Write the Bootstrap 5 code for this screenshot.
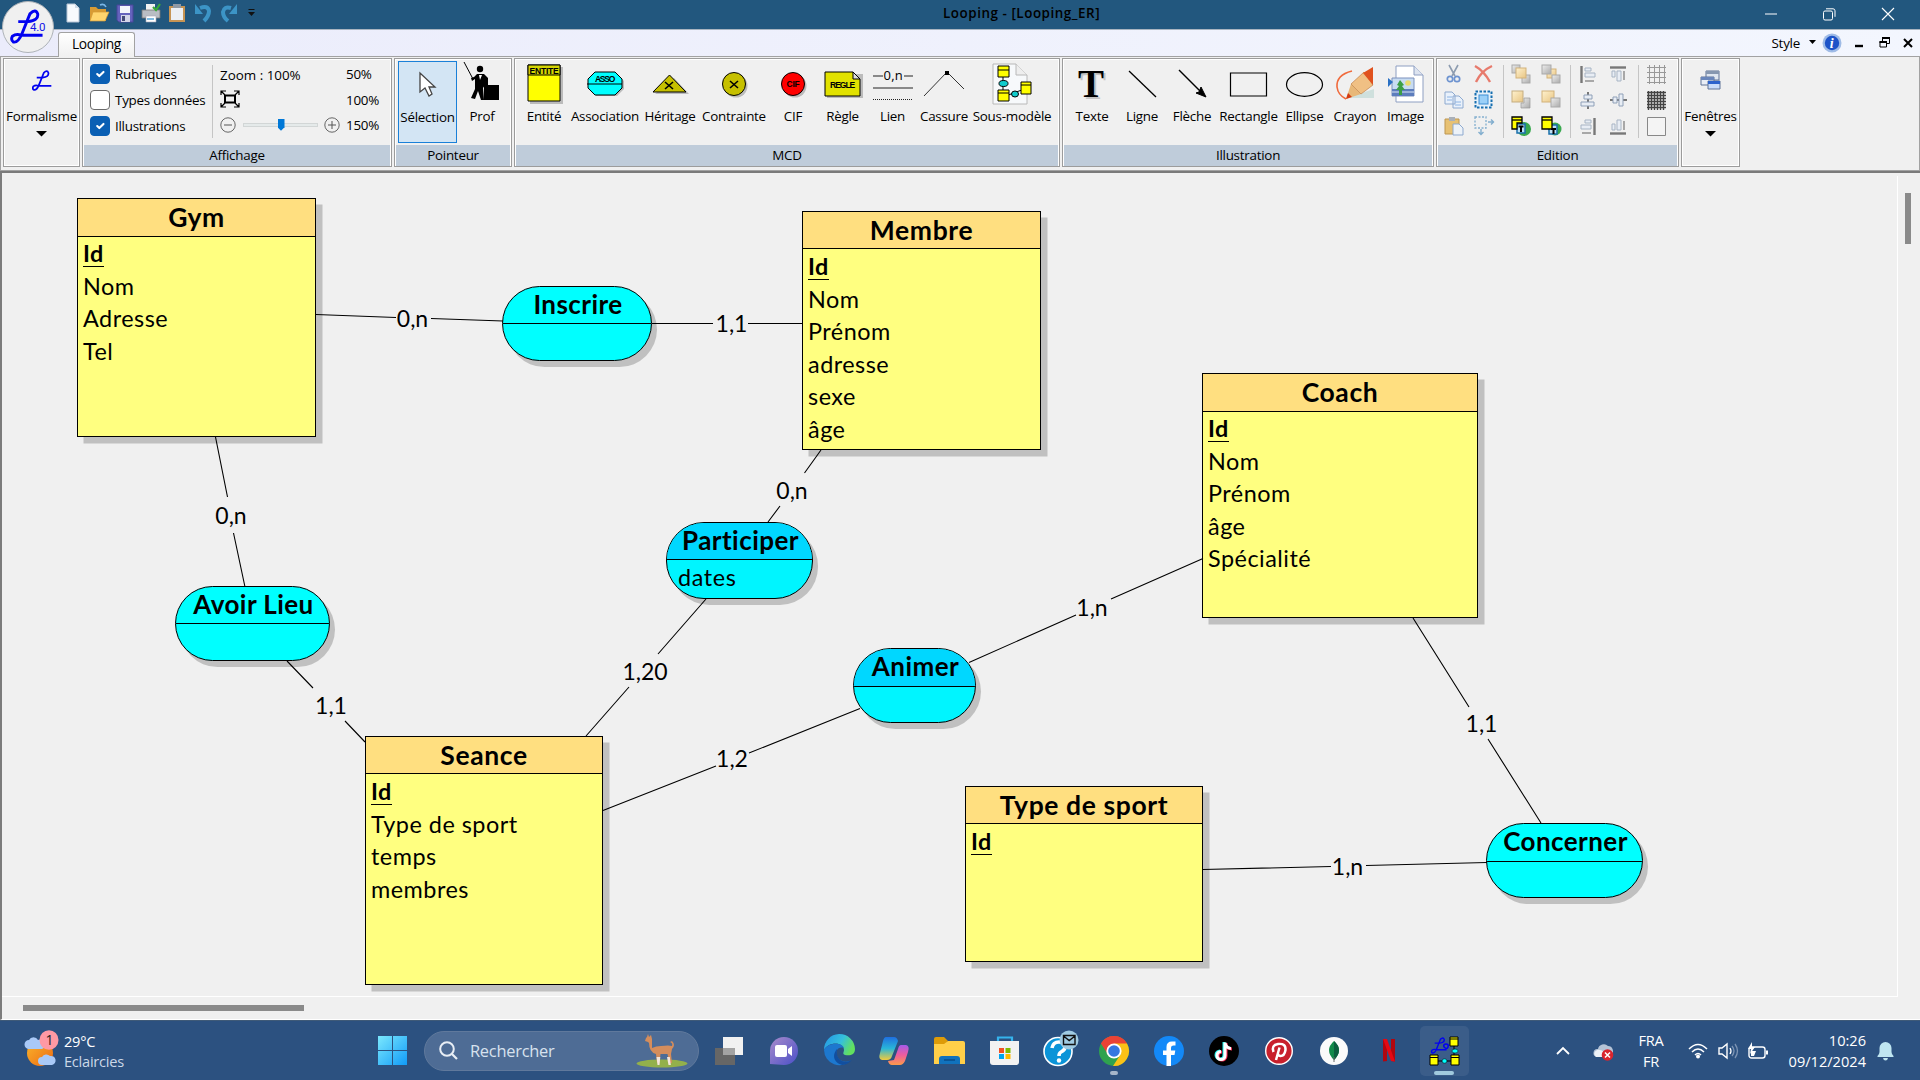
<!DOCTYPE html>
<html lang="fr">
<head>
<meta charset="utf-8">
<meta name="viewport" content="width=device-width, initial-scale=1">
<title>Looping - [Looping_ER]</title>
<link href="https://cdn.jsdelivr.net/npm/bootstrap@5.3.0/dist/css/bootstrap.min.css" rel="stylesheet">
<style>
  html, body { height: 100%; }
  body { width: 1920px; height: 1080px; overflow: hidden; background: #f0f0f0; color: #000; font: 13.4px/18px "Open Sans", "Noto Sans", sans-serif; letter-spacing: -.25px; }
  svg { display: block; flex: none; overflow: visible; }
  /* title bar */
  .titlebar { height: 30px; background: #22577e; border-bottom: 1px solid #a9b4c0; padding-left: 63px; }
  .quick { gap: 6px; height: 26px; }
  .win-title { left: 943px; top: 4px; font-size: 13.4px; font-weight: 600; letter-spacing: .55px; }
  .win-ctl { gap: 46px; padding-right: 25px; height: 28px; }
  .orb { left: 2px; top: 1px; z-index: 3; }
  /* tab strip */
  .tabstrip { height: 27px; background: linear-gradient(90deg, #ebecfb, #f3f6fe); border-bottom: 1px solid #a2a2a2; padding-left: 58px; }
  .tab-main { width: 77px; height: 25px; margin-top: 2px; margin-bottom: -1px; background: linear-gradient(#fff, #f0f0f0); border: 1px solid #a2a2a2; border-bottom: 0; border-radius: 3px 3px 0 0; font-size: 13.8px; letter-spacing: -.4px; padding-top: 2px; }
  .mdi-ctl { padding-right: 7px; height: 25px; }
  /* ribbon */
  .ribbon { height: 114px; padding: 1px 0 0 2px; gap: 2px; border-bottom: 1px solid #a2a2a2; border-right: 1px solid #a2a2a2; border-left: 1px solid #a2a2a2; }
  .grp { height: 109px; border: 1px solid #9c9c9c; box-shadow: inset 0 0 0 1px #fff; padding: 0 1px 1px; }
  .grp-foot { height: 21px; background: #bfccda; font-size: 13.4px; line-height: 21px; text-align: center; }
  .grp-body { height: 86px; }
  .tool { height: 82px; margin-top: 2px; white-space: nowrap; }
  .tool .pic { height: 46px; }
  .tool.active { width: 59px; background: #d3e5f4; border: 1px solid #1a80d8; }
  .vsep { width: 1px; height: 73px; background: #c5c5c5; }
  .check-row { height: 26px; gap: 5px; }
  .form-check-input.cb { width: 20px; height: 20px; margin: 0; border: 1px solid #6b6b6b; border-radius: 4px; flex: none; background-size: 14px; }
  .form-check-input.cb:checked { background-color: #0a5fb4; border-color: #0a5fb4; }
  .zoom-col { width: 126px; margin-left: 7px; }
  .zrow { height: 25.5px; }
  .track { width: 75px; height: 4px; background: #e5eaea; border: 1px solid #d2d6d6; }
  .thumb { width: 7px; height: 12px; left: 34px; top: -5px; background: #0078d7; clip-path: polygon(0 0, 100% 0, 100% 70%, 50% 100%, 0 70%); }
  .col-ic { width: 30px; height: 78px; }
  .col-ic > * { height: 26px; }
  /* workspace */
  .work { height: 849px; border-top: 2px solid #7a7a7a; border-left: 2px solid #7c7c7c; border-bottom: 1px solid #fff; }
  .board { left: -2px; top: -173px; width: 1920px; height: 1020px; }
  .entity { position: absolute; border: 1px solid #000; background: #ffff80; box-shadow: 6.500px 6.500px 0 #c0c0c0; }
  .entity h2, .assoc h2 { margin: 0; font: bold 26.5px/36px Lato, "Open Sans", sans-serif; letter-spacing: .6px; text-align: center; background: #ffdf80; border-bottom: 1px solid #000; height: 37px; }
  .entity.tall h2 { height: 38px; }
  .entity ul { list-style: none; margin: 0; padding: 1px 0 0 5px; font: 23.4px/32.5px Lato, "Open Sans", sans-serif; letter-spacing: .5px; }
  .entity.tall ul { padding-top: 0; }
  .key { font-weight: bold; display: inline-block; border-bottom: 1.5px solid #000; line-height: 26px; }
  .assoc { position: absolute; border: 1px solid #000; border-radius: 38px; background: cyan; box-shadow: 5px 6px 0 #c0c0c0; overflow: hidden; }
  .assoc h2 { background: transparent; font-size: 26px; line-height: 34px; letter-spacing: .45px; padding-left: 2px; }
  .assoc.low h2 { height: 38px; }
  .assoc.alt { background: #00f5ff; } .assoc.alt h2 { background: #00d7ff; }
  .assoc p { margin: 0; padding-left: 11px; font: 23.4px/34px Lato, sans-serif; letter-spacing: .6px; }
  .lbl { font: 23px Lato, "Open Sans", sans-serif; letter-spacing: 0; }
  .bar-v { left: 1903px; top: 20px; width: 6px; height: 51px; background: #8a8a8a; }
  .bar-h { left: 21px; top: 832px; width: 281px; height: 6px; background: #8a8a8a; }
  .rule-h { left: 0; top: 823px; width: 1895px; height: 1px; background: #fff; }
  .rule-v { left: 1895px; top: 3px; width: 1px; height: 821px; background: #fff; }
  /* taskbar */
  .taskbar { height: 60px; background: #2c5180; border-top: 1px solid #3f5a78; color: #fff; font-size: 14.6px; letter-spacing: -.25px; }
  .weather { padding-left: 24px; width: 378px; gap: 8px; line-height: 20px; }
  .weather small { font-size: 14.6px; color: #cbd8e8; }
  .search { width: 275px; height: 40px; border-radius: 20px; background: #4e6c95; border: 1px solid #60799c; margin-left: 17px; font-size: 16.4px; color: #d8e2ee; padding: 0 10px 0 14px; }
  .apps { margin-left: 2.5px; }
  .app { width: 55px; height: 58px; }
  .app .spot { width: 49px; height: 50px; border-radius: 5px; background: #3b5d89; }
  .ind { left: 50%; transform: translateX(-50%); bottom: 5px; height: 4px; border-radius: 2px; }
  .tray { line-height: 20.5px; }
</style>
<script src="https://cdn.jsdelivr.net/npm/bootstrap@5.3.0/dist/js/bootstrap.bundle.min.js"></script>
</head>
<body class="position-relative d-flex flex-column">

<svg width="0" height="0" class="position-absolute">
  <defs>
    <linearGradient id="gGold" x1="0" y1="0" x2="1" y2="1"><stop offset="0" stop-color="#fff2cf"/><stop offset="1" stop-color="#e8c583"/></linearGradient>
    <linearGradient id="gGray" x1="0" y1="0" x2="1" y2="1"><stop offset="0" stop-color="#eee"/><stop offset="1" stop-color="#aaa"/></linearGradient>
    <linearGradient id="gWin" x1="0" y1="0" x2="1" y2="1"><stop offset="0" stop-color="#7be8fd"/><stop offset="1" stop-color="#119bf8"/></linearGradient>
    <linearGradient id="gEdge" x1="0" y1="0" x2="1" y2=".4"><stop offset="0" stop-color="#2394e6"/><stop offset=".6" stop-color="#35c0dc"/><stop offset="1" stop-color="#62e060"/></linearGradient>
    <linearGradient id="gCopA" x1="0" y1="0" x2="0" y2="1"><stop offset="0" stop-color="#1f6fe0"/><stop offset=".5" stop-color="#29b6d8"/><stop offset="1" stop-color="#f1cb3c"/></linearGradient>
    <linearGradient id="gCopB" x1="0" y1="0" x2="0" y2="1"><stop offset="0" stop-color="#a45bea"/><stop offset=".5" stop-color="#ee5c9d"/><stop offset="1" stop-color="#fb9a4a"/></linearGradient>
    <linearGradient id="gChat" x1="0" y1="0" x2="1" y2="1"><stop offset="0" stop-color="#a98ccb"/><stop offset="1" stop-color="#4a4fc8"/></linearGradient>
    <linearGradient id="gSun" x1="0" y1="0" x2="1" y2="1"><stop offset="0" stop-color="#f9b62c"/><stop offset="1" stop-color="#ee6a12"/></linearGradient>
    <symbol id="loop" viewBox="0 0 34 36"><path d="M8 13H18Q29 12 28 5Q26 -1 20 5L12 25Q8 35 3 34Q0 32 2 28Q6 25 11 27H33" fill="none" stroke="#0202f0" stroke-width="3"/></symbol>
    <symbol id="back" viewBox="0 0 20 20"><rect x="1" y="1" width="11" height="11" fill="url(#gGold)" stroke="#c5ad80"/><path d="M13 8h6v10h-9v-5h3z" fill="url(#gGray)" stroke="#999" stroke-width=".7"/></symbol>
  </defs>
</svg>

<!-- Title bar -->
<header class="titlebar d-flex justify-content-between">
  <div class="quick d-flex align-items-center">
    <svg width="20" height="20"><path d="M4 1h8l4 4v14H4z" fill="#f7fafd" stroke="#b8c6d6"/><path d="M12 1v4h4" fill="#cfdbe8"/></svg>
    <svg width="20" height="20"><path d="M1 4h6l2 2h8v12H1z" fill="#d89b34"/><path d="M4 9h16l-4 9H1z" fill="#ffd56e" stroke="#d49a35" stroke-width=".7"/><path d="M11 2q4-2 6 2" fill="none" stroke="#79b6e8" stroke-width="1.6"/></svg>
    <svg width="20" height="20"><path d="M2 2h16v17H4l-2-2z" fill="#6563bd" stroke="#494799"/><path d="M5 3h10v7H5z" fill="#f2f4fb"/><path d="M6 12h9v7H6z" fill="#d2d4e8"/><path d="M7 13h3v5H7z" fill="#444a78"/></svg>
    <svg width="20" height="20"><path d="M5 1h9v6H5z" fill="#f2f2f2"/><path d="M1 7h18v8H1z" fill="#b9bdc4" stroke="#777" stroke-width=".8"/><path d="M5 13h10v6H5z" fill="#fff" stroke="#aab" stroke-width=".6"/><path d="M6 16h7" stroke="#56a4d8" stroke-width="1.5"/><path d="M12 4l3 3 4-6" fill="none" stroke="#36a935" stroke-width="2.2"/></svg>
    <svg width="20" height="20"><path d="M2 3h16v16H2z" fill="#c69454"/><path d="M4 5h12v12H4z" fill="#eceff4"/><path d="M6 1h8v4H6z" fill="#9099a5"/></svg>
    <svg width="20" height="20"><path d="M7 5q8-3 9 3 0 5-5 10" fill="none" stroke="#3c94c6" stroke-width="4"/><path d="M2 1v10h8z" fill="#3c94c6"/></svg>
    <svg width="20" height="20"><path d="M12 5Q5 3 4 9q0 5 5 9" fill="none" stroke="#3c94c6" stroke-width="4"/><path d="M18 1v10h-8z" fill="#3c94c6"/></svg>
    <svg width="10" height="10" style="margin-left:2px"><path d="M1.500 1.500h6" stroke="#111"/><path d="M1 4h7L4.500 8z" fill="#111"/></svg>
  </div>
  <div class="win-title position-absolute">Looping - [Looping_ER]</div>
  <div class="win-ctl d-flex align-items-center">
    <svg width="12" height="12"><path d="M0 6h12" stroke="#fff"/></svg>
    <svg width="13" height="12"><rect x=".5" y="3" width="9" height="9" rx="1.500" fill="none" stroke="#fff"/><path d="M3 .8h7q2 0 2 2v6" fill="none" stroke="#fff"/></svg>
    <svg width="13" height="13"><path d="M0 0l12 12M12 0L0 12" stroke="#fff" stroke-width="1.100"/></svg>
  </div>
</header>
<div class="orb position-absolute">
  <svg width="52" height="52"><circle cx="26" cy="26" r="25.500" fill="#f0f0f0" stroke="#aeb3b8"/><use href="#loop" x="8" y="8" width="34" height="35"/><text x="28" y="30" font-family="Roboto" font-size="11.500" fill="#1414e8">4.0</text></svg>
</div>

<!-- Tab strip -->
<nav class="tabstrip d-flex justify-content-between">
  <div class="tab-main text-center">Looping</div>
  <div class="mdi-ctl d-flex align-items-center">
    <span>Style</span>
    <svg width="7" height="5" style="margin-left:9px"><path d="M0 0h7L3.500 4z"/></svg>
    <svg width="20" height="20" style="margin-left:6px"><circle cx="10" cy="10" r="9.500" fill="#9fbbe6"/><circle cx="10" cy="10" r="7.200" fill="#1d53c8"/><text x="7.800" y="15" font-family="Liberation Serif" font-style="italic" font-weight="bold" font-size="14" fill="#fff">i</text></svg>
    <svg width="8" height="10" style="margin-left:13px"><path d="M0 8h8" stroke="#000" stroke-width="2.400"/></svg>
    <svg width="11" height="11" style="margin-left:16px"><path d="M3.500 4V1h7v5.500H8M1 4.500h6.500v5.500H1z" fill="none" stroke="#000"/><path d="M3 1h8M.5 5h7.500" stroke="#000" stroke-width="2"/></svg>
    <svg width="10" height="10" style="margin-left:13px"><path d="M1 1l8 8M9 1L1 9" stroke="#000" stroke-width="2"/></svg>
  </div>
</nav>

<!-- Ribbon -->
<section class="ribbon d-flex">
  <div class="grp" style="width:77px">
    <div class="tool w-100 d-flex flex-column align-items-center"><div class="pic d-flex align-items-center"><svg width="20" height="21" class="mb-2"><use href="#loop" width="20" height="21"/></svg></div><span>Formalisme</span><svg width="12" height="7" style="margin-top:5px"><path d="M0 1h11L5.500 6.500z"/></svg></div>
  </div>

  <div class="grp" style="width:310px">
    <div class="grp-body d-flex" style="padding:2px 6px 0 6px">
      <div style="width:122px">
        <label class="check-row d-flex align-items-center"><input class="form-check-input cb" type="checkbox" checked>Rubriques</label>
        <label class="check-row d-flex align-items-center"><input class="form-check-input cb" type="checkbox">Types données</label>
        <label class="check-row d-flex align-items-center"><input class="form-check-input cb" type="checkbox" checked>Illustrations</label>
      </div>
      <div class="vsep mt-1"></div>
      <div class="zoom-col">
        <div class="zrow d-flex align-items-center" style="padding-top:2px;letter-spacing:0">Zoom : 100%</div>
        <div class="zrow d-flex align-items-center"><svg width="20" height="18"><rect x="5" y="5.500" width="10" height="7" fill="none" stroke="#000" stroke-width="2"/><path d="M1 5V1h5M14 1h5v4M1 13v4h5M14 17h5v-4M1 1l4 4M19 1l-4 4M1 17l4-4M19 17l-4-4" fill="none" stroke="#000" stroke-width="1.200"/></svg></div>
        <div class="zrow d-flex align-items-center" style="gap:6.500px">
          <svg width="16" height="16"><circle cx="8" cy="8" r="7.200" fill="none" stroke="#666"/><path d="M4 8h8" stroke="#555"/></svg>
          <div class="track position-relative"><div class="thumb position-absolute"></div></div>
          <svg width="16" height="16"><circle cx="8" cy="8" r="7.200" fill="none" stroke="#666"/><path d="M4 8h8M8 4v8" stroke="#555"/></svg>
        </div>
      </div>
      <div><div class="zrow pt-1">50%</div><div class="zrow pt-1">100%</div><div class="zrow pt-1">150%</div></div>
    </div>
    <div class="grp-foot">Affichage</div>
  </div>

  <div class="grp" style="width:118px">
    <div class="grp-body d-flex" style="padding-left:2px">
      <div class="tool active d-flex flex-column align-items-center"><div class="pic d-flex align-items-center"><svg width="18" height="26"><path d="M1 1v19l5-4 4 8 3-2-3-7h6z" fill="#fff" stroke="#444" stroke-width="1.300"/></svg></div><span>Sélection</span></div>
      <div class="tool d-flex flex-column align-items-center" style="width:50px"><div class="pic"><svg width="36" height="42"><path d="M0 1l9 17" stroke="#000"/><circle cx="16" cy="8" r="3.200"/><path d="M7 17l3-1 3-3h7l4 4v9l-3-2-2 3 1 12h-3l-3-9-3 8-4-1 4-9V18l-3 2z"/><path d="M15 14l1 5 2-5z" fill="#fff"/><path d="M20 24h15v15H20z"/></svg></div><span>Prof</span></div>
    </div>
    <div class="grp-foot">Pointeur</div>
  </div>

  <div class="grp" style="width:546px">
    <div class="grp-body d-flex" style="padding-left:3px">
      <div class="tool d-flex flex-column align-items-center" style="width:50px"><div class="pic d-flex align-items-center"><svg width="34" height="40"><path d="M3 3h33v37H3z" fill="#bbb"/><path d="M1 1h32v36H1z" fill="#ff0" stroke="#000"/><path d="M1 1h32v10H1z" fill="#d5d500" stroke="#000"/><text x="2.500" y="9.500" font-family="Liberation Sans" font-weight="bold" font-size="8.500" textLength="29">ENTITE</text></svg></div><span>Entité</span></div>
      <div class="tool d-flex flex-column align-items-center" style="width:72px"><div class="pic d-flex align-items-center"><svg width="38" height="26"><path d="M10 3h21l7 7v8l-7 7H10z" fill="#bbb"/><path d="M9 1h20l7 7v9l-7 7H9l-7-7V8z" fill="#0ff" stroke="#000"/><path d="M1 13h35" stroke="#000"/><text x="9" y="11" font-family="Liberation Sans" font-weight="bold" font-size="8.500" textLength="20">ASSO</text></svg></div><span>Association</span></div>
      <div class="tool d-flex flex-column align-items-center" style="width:58px"><div class="pic d-flex align-items-center"><svg width="36" height="20"><path d="M3 20h34L22 4z" fill="#bbb"/><path d="M1 18h33L17.500 1z" fill="#c6c000" stroke="#000"/><path d="M13 8l8 7M21 8l-8 7" stroke="#000" stroke-width="1.600"/></svg></div><span>Héritage</span></div>
      <div class="tool d-flex flex-column align-items-center" style="width:70px"><div class="pic d-flex align-items-center"><svg width="25" height="25"><circle cx="14" cy="14" r="11.500" fill="#bbb"/><circle cx="12" cy="12" r="11.500" fill="#c6c000" stroke="#000"/><path d="M8 9l8 7M16 9l-8 7" stroke="#000" stroke-width="1.600"/></svg></div><span>Contrainte</span></div>
      <div class="tool d-flex flex-column align-items-center" style="width:48px"><div class="pic d-flex align-items-center"><svg width="25" height="25"><circle cx="14" cy="14" r="11.500" fill="#bbb"/><circle cx="12" cy="12" r="11.500" fill="red" stroke="#000"/><text x="5.500" y="15" font-family="Liberation Sans" font-weight="bold" font-size="8.500" textLength="13">CIF</text></svg></div><span>CIF</span></div>
      <div class="tool d-flex flex-column align-items-center" style="width:51px"><div class="pic d-flex align-items-center"><svg width="38" height="27"><path d="M3 3h36v24H3z" fill="#bbb"/><path d="M1 1h28l7 7v17H1z" fill="#e2e200" stroke="#000"/><path d="M29 1v7h7z" fill="#ddd" stroke="#000"/><text x="6" y="17" font-family="Liberation Sans" font-weight="bold" font-size="8.500" textLength="25">REGLE</text></svg></div><span>Règle</span></div>
      <div class="tool d-flex flex-column align-items-center" style="width:49px"><div class="pic d-flex align-items-center"><svg width="40" height="32"><path d="M0 8h10M31 8h9M0 20h40" stroke="#222" stroke-width="1.200"/><path d="M0 31.500h40" stroke="#222" stroke-dasharray="1 1"/><text x="10.500" y="12" font-size="13" textLength="19">0,n</text></svg></div><span>Lien</span></div>
      <div class="tool d-flex flex-column align-items-center" style="width:54px"><div class="pic d-flex align-items-center"><svg width="42" height="26"><path d="M1 25L24 1 41 18" fill="none" stroke="#333"/><path d="M22 0h4v4h-4z"/></svg></div><span>Cassure</span></div>
      <div class="tool d-flex flex-column align-items-center" style="width:82px"><div class="pic d-flex align-items-center"><svg width="40" height="42"><path d="M1 1h23l11 11v29H1z" fill="#f7f9fb" stroke="#b8b8b8"/><path d="M24 1v11h11" fill="#eee" stroke="#b8b8b8"/><path d="M11 8v26M11 34l24-9" stroke="#000"/><g fill="#ff0" stroke="#000"><path d="M6 3h11v11H6zM6 7h11M6 27h11v11H6zM6 30h11M29 19h10v12H29zM29 22h10"/></g><ellipse cx="11.500" cy="20.500" rx="4.500" ry="3" fill="#1cc" stroke="#000"/><ellipse cx="23" cy="31" rx="3.500" ry="3" fill="#1cc" stroke="#000"/></svg></div><span>Sous-modèle</span></div>
    </div>
    <div class="grp-foot">MCD</div>
  </div>

  <div class="grp" style="width:372px">
    <div class="grp-body d-flex" style="padding-left:3px">
      <div class="tool d-flex flex-column align-items-center" style="width:50px"><div class="pic d-flex align-items-center"><svg width="26" height="28"><text x="1" y="29" font-family="Liberation Serif" font-weight="bold" font-size="39" fill="#c4c4c4" textLength="26">T</text><text x="-1" y="27" font-family="Liberation Serif" font-weight="bold" font-size="39" textLength="26">T</text></svg></div><span>Texte</span></div>
      <div class="tool d-flex flex-column align-items-center" style="width:50px"><div class="pic d-flex align-items-center"><svg width="29" height="28"><path d="M1 1l27 26" stroke="#000" stroke-width="1.300"/></svg></div><span>Ligne</span></div>
      <div class="tool d-flex flex-column align-items-center" style="width:50px"><div class="pic d-flex align-items-center"><svg width="28" height="28"><path d="M1 0l24 24" stroke="#000" stroke-width="1.400"/><path d="M28 27l-10-4 3-1 2-5z" stroke="#000"/></svg></div><span>Flèche</span></div>
      <div class="tool d-flex flex-column align-items-center" style="width:63px"><div class="pic d-flex align-items-center"><svg width="37" height="25"><path d="M.5 1h36v23H.5z" fill="none" stroke="#000" stroke-width="1.200"/></svg></div><span>Rectangle</span></div>
      <div class="tool d-flex flex-column align-items-center" style="width:49px"><div class="pic d-flex align-items-center"><svg width="37" height="25"><ellipse cx="18.500" cy="12.500" rx="18" ry="11.800" fill="none" stroke="#000" stroke-width="1.200"/></svg></div><span>Ellipse</span></div>
      <div class="tool d-flex flex-column align-items-center" style="width:52px"><div class="pic d-flex align-items-center"><svg width="38" height="34"><path d="M10 31h28V22z" fill="#cfe0dd"/><path d="M16 4Q0 8 1 20q1 8 9 12" fill="none" stroke="#f06a3c" stroke-width="1.600"/><path d="M10 32l5-15 10 10z" fill="#e8b878"/><path d="M10 32l2-6 4 4z" fill="#d43a12"/><path d="M15 17L28 5l9 13-12 9z" fill="#f0c084" stroke="#b9743a" stroke-width=".6"/><path d="M27 6L37 0v18z" fill="#e0521e"/></svg></div><span>Crayon</span></div>
      <div class="tool d-flex flex-column align-items-center" style="width:49px"><div class="pic d-flex align-items-center"><svg width="36" height="38"><path d="M8 1h18l9 9v27H8z" fill="#fff" stroke="#8e9fc2"/><path d="M26 1v9h9" fill="#dde4f0" stroke="#8e9fc2"/><path d="M4 13h22v18H4z" fill="#c8dcf2" stroke="#7c91bd"/><path d="M4 24h22v7H4z" fill="#5d7dbd"/><path d="M4 27h22" stroke="#dbe7f6"/><path d="M12 15l4 5-2 1 3 4h-3v5h-3v-5H8l3-4-2-1z" fill="#3c9f45"/><circle cx="20" cy="18" r="2.800" fill="#e8dc70"/><path d="M0 13l5 4-5 5z" fill="#2a70c4"/></svg></div><span>Image</span></div>
    </div>
    <div class="grp-foot">Illustration</div>
  </div>

  <div class="grp" style="width:243px">
    <div class="grp-body d-flex" style="padding:2px 0 0 1px">
      <div class="col-ic">
        <div class="d-flex justify-content-center align-items-center"><svg width="20" height="20"><path d="M5 1l6 11M14 1L8 12" stroke="#8d9cb0" stroke-width="1.600"/><circle cx="6" cy="15" r="2.700" fill="none" stroke="#6d93d0" stroke-width="1.700"/><circle cx="13" cy="15" r="2.700" fill="none" stroke="#6d93d0" stroke-width="1.700"/></svg></div>
        <div class="d-flex justify-content-center align-items-center"><svg width="20" height="18"><path d="M1 1h7l3 3v9H1zM9 5h6l4 4v8H9z" fill="#e9f1fb" stroke="#8da9cf"/><path d="M3 6h5M3 9h5M11 11h6M11 14h6" stroke="#8db4e4"/></svg></div>
        <div class="d-flex justify-content-center align-items-center"><svg width="20" height="20"><path d="M1 3h14v15H1z" fill="#e7c173" stroke="#bd9651"/><path d="M5 1h6v4H5z" fill="#aab0b8"/><path d="M9 8h6l4 4v7H9z" fill="#edf2f8" stroke="#8da9cf"/></svg></div>
      </div>
      <div class="col-ic">
        <div class="d-flex justify-content-center align-items-center"><svg width="20" height="18"><path d="M1 1q9 5 15 16M18 1Q7 6 2 17" fill="none" stroke="#e77a6c" stroke-width="2.400"/></svg></div>
        <div class="d-flex justify-content-center align-items-center"><svg width="20" height="20"><rect x="1.500" y="1.500" width="16" height="16" fill="#e4f1fb" stroke="#176fb0" stroke-width="2" stroke-dasharray="2.500 1.500"/><rect x="5" y="5" width="9" height="9" fill="#9ad0f8" stroke="#3f8fd4"/></svg></div>
        <div class="d-flex justify-content-center align-items-center"><svg width="20" height="20"><rect x="1" y="1" width="11" height="11" fill="none" stroke="#82aece" stroke-width="1.300" stroke-dasharray="2 1.500"/><path d="M14 6h6M17 3.500l2.500 2.500-2.500 2.500M7 13v6M4.500 16l2.500 2.500 2.500-2.500" fill="none" stroke="#82aece" stroke-width="1.400"/></svg></div>
      </div>
      <div class="vsep mt-1" style="margin:0 2px 0 4px"></div>
      <div class="col-ic">
        <div class="d-flex justify-content-center align-items-center"><svg width="20" height="20"><rect x="1" y="1" width="8" height="8" fill="url(#gGray)" stroke="#aaa"/><rect x="11" y="11" width="8" height="8" fill="url(#gGray)" stroke="#aaa"/><rect x="5" y="4" width="10" height="10" fill="url(#gGold)" stroke="#d2b27a"/></svg></div>
        <div class="d-flex justify-content-center align-items-center"><svg width="20" height="20"><use href="#back" width="20" height="20"/></svg></div>
        <div class="d-flex justify-content-center align-items-center"><svg width="20" height="20"><circle cx="13" cy="13" r="7" fill="#39a94f"/><path d="M6 8h8v9H6z" fill="#bfe0f4" stroke="#1b70aa" stroke-width="1.500"/><path d="M7.500 10.500h5M10 11v5" stroke="#000" stroke-width="2"/><path d="M1 1h10v6H6v6H1z" fill="#ff0" stroke="#000" stroke-width="1.300"/><path d="M1 4h10" stroke="#000" stroke-width="1.300"/></svg></div>
      </div>
      <div class="col-ic">
        <div class="d-flex justify-content-center align-items-center"><svg width="20" height="20"><rect x="6" y="5" width="9" height="9" fill="url(#gGold)" stroke="#d2b27a"/><rect x="1" y="1" width="9" height="9" fill="url(#gGray)" stroke="#aaa"/><rect x="11" y="11" width="8" height="8" fill="url(#gGray)" stroke="#aaa"/></svg></div>
        <div class="d-flex justify-content-center align-items-center"><svg width="20" height="20"><rect x="1" y="1" width="12" height="11" fill="url(#gGold)" stroke="#d2b27a"/><rect x="10" y="8" width="9" height="9" fill="url(#gGray)" stroke="#aaa"/></svg></div>
        <div class="d-flex justify-content-center align-items-center"><svg width="20" height="20"><circle cx="14" cy="13" r="6.500" fill="#39a94f"/><path d="M8 9h8v9H8z" fill="#bfe0f4" stroke="#1b70aa" stroke-width="1.500"/><path d="M10 13h5M12.500 13v5" stroke="#000" stroke-width="2"/><path d="M1 1h10v12H1z" fill="#ff0" stroke="#000" stroke-width="1.300"/><path d="M1 4h10" stroke="#000" stroke-width="1.300"/></svg></div>
      </div>
      <div class="vsep mt-1" style="margin:0 2px 0 4px"></div>
      <div class="col-ic">
        <div class="d-flex justify-content-center align-items-center"><svg width="16" height="17"><path d="M1.500 0v17" stroke="#777" stroke-width="2.400"/><path d="M5 2h6v3H5zM5 7h10v4H5z" fill="#e8edf4" stroke="#a7b4c4"/><path d="M5 15h9" stroke="#888" stroke-width="1.400"/></svg></div>
        <div class="d-flex justify-content-center align-items-center"><svg width="16" height="17"><path d="M8 0v17" stroke="#777" stroke-width="2"/><path d="M4 3h8v4H4zM1 10h13v4H1z" fill="#e8edf4" stroke="#8fa0b8"/></svg></div>
        <div class="d-flex justify-content-center align-items-center"><svg width="16" height="17"><path d="M14.500 0v17" stroke="#777" stroke-width="2.400"/><path d="M5 2h6v3H5zM1 7h10v4H1z" fill="#e8edf4" stroke="#a7b4c4"/><path d="M2 15h9" stroke="#888" stroke-width="1.400"/></svg></div>
      </div>
      <div class="col-ic">
        <div class="d-flex justify-content-center align-items-center"><svg width="16" height="17"><path d="M0 1.500h16" stroke="#777" stroke-width="2.400"/><path d="M2 5h3v6H2zM7 5h4v10H7z" fill="#e8edf4" stroke="#a7b4c4"/><path d="M14 5v9" stroke="#888" stroke-width="1.400"/></svg></div>
        <div class="d-flex justify-content-center align-items-center"><svg width="17" height="16"><path d="M0 8h17" stroke="#777" stroke-width="2"/><path d="M3 5h4v6H3zM9 2h4v12H9z" fill="#e8edf4" stroke="#8fa0b8"/></svg></div>
        <div class="d-flex justify-content-center align-items-center"><svg width="16" height="17"><path d="M0 15.500h16" stroke="#777" stroke-width="2.400"/><path d="M2 6h3v6H2zM7 2h4v10H7z" fill="#e8edf4" stroke="#a7b4c4"/><path d="M14 3v9" stroke="#888" stroke-width="1.400"/></svg></div>
      </div>
      <div class="vsep mt-1" style="margin:0 2px 0 5px"></div>
      <div class="col-ic">
        <div class="d-flex justify-content-center align-items-center"><svg width="19" height="19"><path d="M2.500 0v19M7.500 0v19M12.500 0v19M17.500 0v19M0 2.500h19M0 7.500h19M0 12.500h19M0 17.500h19" stroke="#999"/></svg></div>
        <div class="d-flex justify-content-center align-items-center"><svg width="19" height="19"><path d="M1.500 0v19M4.500 0v19M7.500 0v19M10.500 0v19M13.500 0v19M16.500 0v19M0 1.500h19M0 4.500h19M0 7.500h19M0 10.500h19M0 13.500h19M0 16.500h19" stroke="#444" stroke-width="1.400"/></svg></div>
        <div class="d-flex justify-content-center align-items-center"><svg width="19" height="19"><path d="M.5.5h18v18H.5z" fill="#f4f4f4" stroke="#888"/></svg></div>
      </div>
    </div>
    <div class="grp-foot">Edition</div>
  </div>

  <div class="grp" style="width:59px">
    <div class="tool w-100 d-flex flex-column align-items-center"><div class="pic d-flex align-items-center"><svg width="22" height="20" class="mb-2"><g stroke="#5f7396"><path d="M6 1h13v9H6z" fill="#dfe6f0"/><path d="M1 7h13v8H1z" fill="#e9eef6"/><path d="M8 11h12v8H8z" fill="#c9dcfa"/></g><path d="M6 1h13v3H6z" fill="#8697b0"/><path d="M1 7h13v3H1z" fill="#6a86bb"/><path d="M8 11h12v3H8z" fill="#2c62cc"/></svg></div><span>Fenêtres</span><svg width="12" height="7" style="margin-top:5px"><path d="M0 1h11L5.500 6.500z"/></svg></div>
  </div>
</section>

<!-- Diagram workspace -->
<main class="work position-relative">
  <div class="board position-absolute">
    <section class="entity tall" style="left:77px;top:198px;width:239px;height:239px"><h2>Gym</h2><ul><li><span class="key">Id</span></li><li>Nom</li><li>Adresse</li><li>Tel</li></ul></section>
    <section class="entity" style="left:802px;top:211px;width:239px;height:239px"><h2>Membre</h2><ul><li><span class="key">Id</span></li><li>Nom</li><li>Prénom</li><li>adresse</li><li>sexe</li><li>âge</li></ul></section>
    <section class="entity" style="left:365px;top:736px;width:238px;height:249px"><h2>Seance</h2><ul><li><span class="key">Id</span></li><li>Type de sport</li><li>temps</li><li>membres</li></ul></section>
    <section class="entity tall" style="left:1202px;top:373px;width:276px;height:245px"><h2>Coach</h2><ul><li><span class="key">Id</span></li><li>Nom</li><li>Prénom</li><li>âge</li><li>Spécialité</li></ul></section>
    <section class="entity" style="left:965px;top:786px;width:238px;height:176px"><h2>Type de sport</h2><ul><li><span class="key">Id</span></li></ul></section>

    <section class="assoc" style="left:502px;top:286px;width:150px;height:75px"><h2>Inscrire</h2></section>
    <section class="assoc alt" style="left:666px;top:522px;width:147px;height:77px"><h2>Participer</h2><p>dates</p></section>
    <section class="assoc" style="left:175px;top:586px;width:155px;height:75px"><h2>Avoir Lieu</h2></section>
    <section class="assoc alt low" style="left:853px;top:648px;width:123px;height:75px"><h2>Animer</h2></section>
    <section class="assoc low" style="left:1486px;top:823px;width:157px;height:75px"><h2>Concerner</h2></section>

    <svg width="1920" height="1020" class="position-absolute top-0 start-0">
      <g stroke="#000" stroke-width="1.100" fill="none">
        <path d="M316 314.500L396 317.500M431 318.500L503 321"/>
        <path d="M652 323.500H713M748 323.500H803"/>
        <path d="M821 450L804.500 473M780 506L768 522"/>
        <path d="M706 599L658 654M629 687L586 736"/>
        <path d="M287 661L313 688M345 721L365 742"/>
        <path d="M215.500 437L227.500 497M233.500 533L245 587"/>
        <path d="M603 810.500L716 766M749 753L860 708.500"/>
        <path d="M969 662.500L1076 615M1111 599L1203 558.500"/>
        <path d="M1413 618L1469 707M1488 739L1541 823"/>
        <path d="M1203 869.500L1331 866.500M1366 865.500L1487 862.500"/>
      </g>
      <g class="lbl" text-anchor="middle">
        <text x="412.500" y="326.500">0,n</text><text x="731.500" y="332">1,1</text><text x="792" y="499">0,n</text>
        <text x="645" y="680">1,20</text><text x="331" y="714">1,1</text><text x="231" y="524">0,n</text>
        <text x="732" y="767">1,2</text><text x="1092" y="616">1,n</text><text x="1481.500" y="732">1,1</text><text x="1347.500" y="875">1,n</text>
      </g>
    </svg>
  </div>
  <div class="rule-h position-absolute"></div><div class="rule-v position-absolute"></div>
  <div class="bar-v position-absolute"></div><div class="bar-h position-absolute"></div>
</main>

<!-- Taskbar -->
<footer class="taskbar d-flex align-items-center">
  <div class="weather d-flex align-items-center">
    <svg width="36" height="40"><circle cx="16" cy="22" r="13" fill="url(#gSun)"/><path d="M5 18a4.500 4.500 0 0 1 0-9 5 5 0 0 1 9 0 4.500 4.500 0 0 1 4 9zM18 34a4 4 0 0 1 0-8 5 5 0 0 1 8-1 4.500 4.500 0 0 1 2 9z" fill="#a9c9f7"/><ellipse cx="25" cy="9" rx="9.500" ry="9.800" fill="#ff99a4"/><text x="21.500" y="14" font-size="14" fill="#222">1</text></svg>
    <div style="margin-left:-4px">29°C<br><small>Eclaircies</small></div>
  </div>
  <svg width="29" height="29"><path d="M0 0h14v14H0zM15 0h14v14H15zM0 15h14v14H0zM15 15h14v14H15z" fill="url(#gWin)"/></svg>
  <div class="search d-flex align-items-center justify-content-between">
    <div class="d-flex align-items-center"><svg width="19" height="19"><circle cx="8" cy="8" r="6.800" fill="none" stroke="#e8eef5" stroke-width="2"/><path d="M13 13l5 5" stroke="#e8eef5" stroke-width="2.200"/></svg><span style="margin-left:12px">Rechercher</span></div>
    <svg width="52" height="34"><ellipse cx="26" cy="29.500" rx="25.500" ry="4" fill="#93b04b"/><path d="M12 4l1-3 1 3 2-2 1 4v9q4-2 9-2 8-1 11 0 1-3-2-4l2-1q4 4 0 8l-1 5 1 9h-2.500l-2-9h-7l-1 9H22l-1-9q-7-2-7-11l-1-1-3-1 1-3z" fill="#d48d5c" transform="translate(-1 -1)"/><path d="M20.500 23l1 8h2l.8-8zM31 23l1.500 8h2.300l-1-8z" fill="#f4e6da"/></svg>
  </div>
  <div class="apps d-flex">
    <div class="app d-flex align-items-center justify-content-center"><svg width="28" height="28"><path d="M0 11h20v17H0z" fill="#666"/><path d="M8 0h20v18H8z" fill="#f1f1f1"/><path d="M8 11h12v7H8z" fill="#a3a3a3"/></svg></div>
    <div class="app d-flex align-items-center justify-content-center"><svg width="28" height="28"><path d="M0 27V14a14 14 0 1 1 14 14z" fill="url(#gChat)"/><rect x="5" y="8" width="12" height="12" rx="2" fill="#fff"/><path d="M18 12l4-3v10l-4-3z" fill="#fff"/></svg></div>
    <div class="app d-flex align-items-center justify-content-center"><svg width="31" height="31"><path d="M0 15A15.500 15.500 0 0 1 31 14c0 6-5 7-10 6-3-1-1-3-1-5 0-8-15-9-20 0z" fill="url(#gEdge)"/><path d="M0 15C4 7 18 7 20 13c-6-2-9 3-7 8 2 6 10 7 14 4a15.500 15.500 0 0 1-27-10z" fill="#1d78cf"/><path d="M13 14c-6 7-2 15 6 16a15 15 0 0 0 9-5c-7 4-17 1-15-11z" fill="#124f9f"/></svg></div>
    <div class="app d-flex align-items-center justify-content-center"><svg width="30" height="28"><path d="M7 0h8q3 0 4 4l-6 15q-1 4-5 4H3q-4-1-2-7L4 4Q5 0 7 0z" fill="url(#gCopA)"/><path d="M22 8h5q4 1 2 7l-3 9q-2 4-5 4h-8q-3 0-4-4l6-1 4-11q1-4 3-4z" fill="url(#gCopB)"/></svg></div>
    <div class="app d-flex align-items-center justify-content-center"><svg width="31" height="27"><path d="M0 2q0-2 2-2h8l4 4-4 5H0z" fill="#dd9b08"/><path d="M0 7h10l4-3h15q2 0 2 2v21H0z" fill="#ffcf49"/><path d="M5 27v-5q0-3 3-3h15q3 0 3 3v5z" fill="#1172bd"/><path d="M10 23h11" stroke="#0a4f8c" stroke-width="1.600"/></svg></div>
    <div class="app d-flex align-items-center justify-content-center"><svg width="29" height="30"><path d="M8 6V1.500h14V6" fill="none" stroke="#35b3ec" stroke-width="2.200"/><path d="M0 5h29v21q0 3-3 3H3q-3 0-3-3z" fill="#f2f2f2"/><path d="M9 12h5v5H9z" fill="#f25022"/><path d="M15.500 12h5v5h-5z" fill="#7fba00"/><path d="M9 18h5v5H9z" fill="#00a4ef"/><path d="M15.500 18h5v5h-5z" fill="#ffb900"/></svg></div>
    <div class="app d-flex align-items-center justify-content-center"><svg width="30" height="30"><circle cx="14" cy="15.500" r="14" fill="#0b94d8" stroke="#fff" stroke-width="1.600"/><path d="M8 12q1-6 7-6t6 5q0 3-4 5-2 1-2 4" fill="none" stroke="#fff" stroke-width="3.600"/><circle cx="15" cy="24.500" r="2.200" fill="#fff"/><circle cx="25" cy="4" r="9.500" fill="#9fcbe2"/><path d="M19.500-.5h11.500v9H19.500zM19.500 0l5.700 4.500L31 0" fill="none" stroke="#111" stroke-width="1.400"/></svg></div>
    <div class="app position-relative d-flex align-items-center justify-content-center"><svg width="30" height="30"><circle cx="15" cy="15" r="15" fill="#2fa24f"/><path d="M15 15L2 7.500A15 15 0 0 1 28 7.500z" fill="#ea4335"/><path d="M2 7.500A15 15 0 0 1 28 7.500H15l-6 11z" fill="#ea4335"/><path d="M28 7.500A15 15 0 0 1 14 30l7.500-11.500L15 7.500z" fill="#fbc116"/><circle cx="15" cy="15" r="7.600" fill="#fff"/><circle cx="15" cy="15" r="5.800" fill="#3577e0"/></svg><i class="ind position-absolute" style="width:8px;background:#a6b5c9"></i></div>
    <div class="app d-flex align-items-center justify-content-center"><svg width="30" height="30"><circle cx="15" cy="15" r="15" fill="#1389f8"/><path d="M12.500 30V19H9v-4.500h3.500V11q0-5.500 5.500-5.500h3.500v4h-2q-2.500 0-2.500 2.300v2.700h4.300l-.8 4.500H17V30z" fill="#fff"/></svg></div>
    <div class="app d-flex align-items-center justify-content-center"><svg width="30" height="30"><circle cx="15" cy="15" r="15" fill="#000"/><g fill="none" stroke-width="3"><path d="M15 6v13a4 4 0 1 1-4-4M15 7q1 5 6 5" stroke="#25f4ee"/><path d="M17 7v13a4 4 0 1 1-4-4M17 8q1 5 6 5" stroke="#fe2c55"/><path d="M16 6.500v13a4 4 0 1 1-4-4M16 7q1 5 6 5.500" stroke="#fff"/></g></svg></div>
    <div class="app d-flex align-items-center justify-content-center"><svg width="28" height="28"><circle cx="14" cy="14" r="13.300" fill="#c8202c" stroke="#fff" stroke-width="1.400"/><path d="M8.500 15Q6 8 13 7q8-1 7.500 6-1 6-5 6-2 0-2.500-2M14.500 10.500L11 23" fill="none" stroke="#fff" stroke-width="2.500"/></svg></div>
    <div class="app d-flex align-items-center justify-content-center"><svg width="28" height="28"><circle cx="14" cy="14" r="14" fill="#fafafa"/><path d="M14 4q10 9 0 19q-10-10 0-19z" fill="#118a4a"/><path d="M14 4q10 9 0 19z" fill="#0b5e3e"/><path d="M14 20v5" stroke="#666"/></svg></div>
    <div class="app d-flex align-items-center justify-content-center"><svg width="12" height="23"><path d="M0 0h4v22l-4 .5zM8 0h4v22.500L8 22z" fill="#b1060f"/><path d="M0 0h4l8 22.500L8 22z" fill="#e50914"/></svg></div>
    <div class="app position-relative d-flex align-items-center justify-content-center"><div class="spot d-flex align-items-center justify-content-center"><svg width="30" height="30"><g fill="none" stroke="#000"><path d="M25 9v12M8 25h16"/></g><use href="#loop" x="1" y="1" width="18" height="17"/><path d="M15 11q-1-3 2-3t2 3-4 0" fill="none" stroke="#0202f0" stroke-width="1.600"/><g fill="#ff0" stroke="#000"><path d="M21 1h8v9h-8zM21 3h8M1 19h8v10H1zM1 21.500h8M22 19h8v10h-8zM22 21.500h8"/></g><ellipse cx="26" cy="15" rx="3" ry="2" fill="#0ff" stroke="#000" stroke-width=".5"/><ellipse cx="15.500" cy="25" rx="2.500" ry="2.200" fill="#0ff" stroke="#000" stroke-width=".5"/></svg></div><i class="ind position-absolute" style="width:20px;background:#a1cade"></i></div>
  </div>
  <div class="tray d-flex align-items-center ms-auto" style="padding-right:26px">
    <svg width="14" height="8"><path d="M1 7l6-6 6 6" fill="none" stroke="#fff" stroke-width="1.800"/></svg>
    <svg width="21" height="18" style="margin:2px 0 0 23px"><path d="M4 14a4 4 0 0 1 1-8 6 6 0 0 1 10-3 5 5 0 0 1 3 9z" fill="#b5c3d6"/><path d="M3 14q-4-4 1-7 4-1 8 3l2 4z" fill="#eef2f7"/><circle cx="14.500" cy="12" r="5.800" fill="#d9252e"/><path d="M12 9.500l5 5M17 9.500l-5 5" stroke="#fff" stroke-width="1.500"/></svg>
    <div class="text-center" style="margin-left:23px;width:28px">FRA<br>FR</div>
    <svg width="20" height="16" style="margin-left:23px"><g fill="none" stroke="#fff" stroke-width="1.500"><path d="M1 6q9-9 18 0M4 9q6-6 12 0M7 12q3-3 6 0"/></g><circle cx="10" cy="13.500" r="2" fill="#fff"/></svg>
    <svg width="20" height="16" style="margin-left:10px"><path d="M1 5h3l5-4v14l-5-4H1z" fill="none" stroke="#fff" stroke-width="1.400"/><path d="M12 5q2 3 0 6" fill="none" stroke="#fff" stroke-width="1.300"/><path d="M14 3q4 5 0 10M17 1q5 7 0 14" fill="none" stroke="#7d94b3" stroke-width="1.300"/></svg>
    <svg width="20" height="16" style="margin-left:10px"><rect x="1" y="4" width="16" height="11" rx="2.500" fill="none" stroke="#fff" stroke-width="1.400"/><path d="M18 7.500h2v4h-2zM3 8h5l-2 5H3z" fill="#fff"/><path d="M4-1L0 6h3l-1 5 5-7H4z" fill="#fff"/></svg>
    <div class="text-end" style="margin-left:19px;width:79px;letter-spacing:0">10:26<br>09/12/2024</div>
    <svg width="17" height="20" style="margin-left:11px"><path d="M.5 15q2-2 2-4V7a6 6 0 0 1 12 0v4q0 2 2 4v1H.5zM6 17h5q-.5 2.500-2.500 2.500T6 17z" fill="#bfe6f1"/></svg>
  </div>
</footer>
</body>
</html>
